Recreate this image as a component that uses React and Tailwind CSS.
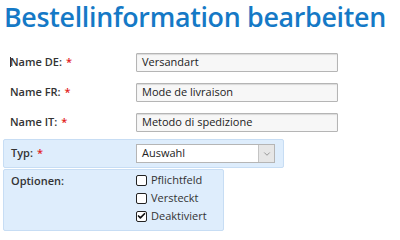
import { ChevronDown, Check } from 'lucide-react'

function Req() {
  return <span className="text-[#e21b1b] ml-1">*</span>
}

function TextRow({ label, value }) {
  return (
    <div className="flex items-center h-[19px]">
      <div className="w-[136px] pl-[10px] font-semibold text-[#333]">
        {label}
        <Req />
      </div>
      <div className="w-[202px] h-[19px] border border-[#b5b5b5] bg-[#f7f7f7] rounded-[1px] shadow-[inset_0_1px_1px_rgba(0,0,0,0.12)] px-[5px] flex items-center text-[#222]">
        {value}
      </div>
    </div>
  )
}

function Box({ checked, label }) {
  return (
    <div className="flex items-center h-[18px] gap-[4px]">
      <span className="w-[11px] h-[11px] border-[1.5px] border-[#222] rounded-[2px] bg-white flex items-center justify-center">
        {checked && <Check size={10} strokeWidth={4.5} className="text-[#111]" />}
      </span>
      <span className="text-[#333]">{label}</span>
    </div>
  )
}

export default function App() {
  return (
    <div className="w-[400px] h-[233px] bg-white overflow-hidden text-[11px] font-['Open_Sans',sans-serif]">
      <h1 className="pl-[4px] text-[26.8px] leading-[34px] font-semibold text-[#1579c6] tracking-[-0.3px] whitespace-nowrap">
        Bestellinformation bearbeiten
      </h1>
      <div className="mt-[19px] flex flex-col gap-[11px]">
        <div className="relative">
          <span className="absolute left-[10px] top-[4px] w-px h-[10px] bg-[#333]" />
          <TextRow label="Name DE:" value="Versandart" />
        </div>
        <TextRow label="Name FR:" value="Mode de livraison" />
        <TextRow label="Name IT:" value="Metodo di spedizione" />
      </div>
      <div className="mt-[7px] ml-[3px] w-[281px] h-[29px] bg-[#deedfc] border border-[#c7ddf4] rounded-[2px] flex items-center">
        <div className="w-[132px] pl-[7px] font-semibold text-[#333]">
          Typ:
          <Req />
        </div>
        <div className="w-[139px] h-[19px] border border-[#b5b5b5] bg-white flex items-center">
          <span className="flex-1 px-[5px] text-[#222]">Auswahl</span>
          <span className="w-[16px] h-full bg-[#e6e6e6] border-l border-[#c4c4c4] flex items-center justify-center">
            <ChevronDown size={10} className="text-[#888]" />
          </span>
        </div>
      </div>
      <div className="mt-px ml-[3px] w-[221px] h-[62px] bg-[#deedfc] border border-[#c7ddf4] rounded-[2px] flex pt-[1px]">
        <div className="w-[132px] pl-[7px] pt-[2px] font-semibold text-[#333]">Optionen:</div>
        <div className="flex flex-col">
          <Box label="Pflichtfeld" />
          <Box label="Versteckt" />
          <Box checked label="Deaktiviert" />
        </div>
      </div>
    </div>
  )
}
